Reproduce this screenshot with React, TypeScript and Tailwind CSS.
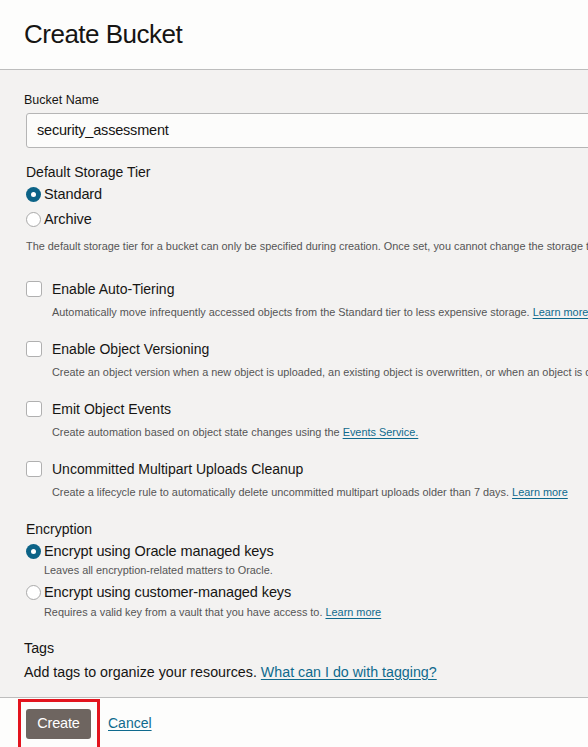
import React from 'react';

const Radio = ({ checked, label }: { checked?: boolean; label: string }) => (
    <div className="flex items-center h-[20px]">
        {checked ? (
            <span className="w-[15px] h-[15px] rounded-full bg-[#0c6387] flex items-center justify-center shrink-0">
                <span className="w-[5px] h-[5px] rounded-full bg-white" />
            </span>
        ) : (
            <span className="w-[15px] h-[15px] rounded-full bg-white border border-[#a9a9a9] shrink-0" />
        )}
        <span className="ml-[3px] text-[14.5px] leading-[20px] text-[#161513] tracking-[-0.1px]">
            {label}
        </span>
    </div>
);

const Link = ({ children }: { children: React.ReactNode }) => (
    <a className="text-[#0f6a8d] underline underline-offset-[2px] cursor-pointer">{children}</a>
);

const CheckOption = ({ label, children }: { label: string; children: React.ReactNode }) => (
    <div className="mt-[20px] first:mt-[26px]">
        <div className="flex items-center h-[20px]">
            <span className="w-[16px] h-[16px] rounded-[3px] bg-white border border-[#b0b0b0] shrink-0" />
            <span className="ml-[10px] text-[14px] leading-[20px] text-[#161513]">{label}</span>
        </div>
        <div className="mt-[6px] ml-[26px] text-[10.9px] leading-[14px] text-[#555]">{children}</div>
    </div>
);

export default function App() {
    return (
        <div
            className="w-[588px] h-[747px] overflow-hidden bg-white whitespace-nowrap"
            style={{ fontFamily: '"Liberation Sans", Arial, sans-serif' }}
        >
            <div className="h-[70px] border-b border-[#bdbdbd] bg-[#fdfdfc] pl-[24px] pt-[18px]">
                <h1 className="text-[26px] leading-[32px] text-[#161513] tracking-[-0.5px]">
                    Create Bucket
                </h1>
            </div>

            <div className="bg-[#f3f2f1] border-b border-[#bdbdbd] pl-[26px] pt-[22px] pb-[17px]">
                <div className="-ml-[2px] text-[12.5px] leading-[16px] text-[#161513]">Bucket Name</div>
                <div className="mt-[5px] h-[35px] w-[700px] bg-[#fcfcfb] border border-[#b5b5b5] rounded-[3px] flex items-center pl-[10px] text-[14.5px] text-[#161513] tracking-[-0.2px]">
                    security_assessment
                </div>

                <div className="mt-[16px] text-[14px] leading-[16px] text-[#161513]">
                    Default Storage Tier
                </div>
                <div className="mt-[4px]">
                    <Radio checked label="Standard" />
                </div>
                <div className="mt-[5px]">
                    <Radio label="Archive" />
                </div>
                <div className="mt-[10px] text-[10.9px] leading-[14px] text-[#555]">
                    The default storage tier for a bucket can only be specified during creation. Once set, you cannot change the storage tier.
                </div>

                <div>
                    <CheckOption label="Enable Auto-Tiering">
                        Automatically move infrequently accessed objects from the Standard tier to less expensive storage.{' '}
                        <Link>Learn more</Link>
                    </CheckOption>
                    <CheckOption label="Enable Object Versioning">
                        Create an object version when a new object is uploaded, an existing object is overwritten, or when an object is deleted.
                    </CheckOption>
                    <CheckOption label="Emit Object Events">
                        Create automation based on object state changes using the <Link>Events Service.</Link>
                    </CheckOption>
                    <CheckOption label="Uncommitted Multipart Uploads Cleanup">
                        Create a lifecycle rule to automatically delete uncommitted multipart uploads older than 7 days.{' '}
                        <Link>Learn more</Link>
                    </CheckOption>
                </div>

                <div className="mt-[22px] text-[14px] leading-[16px] text-[#161513]">Encryption</div>
                <div className="mt-[4px]">
                    <Radio checked label="Encrypt using Oracle managed keys" />
                </div>
                <div className="mt-[2px] ml-[18px] text-[10.9px] leading-[14px] text-[#555]">
                    Leaves all encryption-related matters to Oracle.
                </div>
                <div className="mt-[5px]">
                    <Radio label="Encrypt using customer-managed keys" />
                </div>
                <div className="mt-[3px] ml-[18px] text-[10.9px] leading-[14px] text-[#555]">
                    Requires a valid key from a vault that you have access to. <Link>Learn more</Link>
                </div>

                <div className="-ml-[2px] mt-[21px] text-[14.25px] leading-[16px] text-[#161513]">Tags</div>
                <div className="-ml-[2px] mt-[8px] text-[14.25px] leading-[16px] text-[#161513]">
                    Add tags to organize your resources. <Link>What can I do with tagging?</Link>
                </div>
            </div>

            <div className="bg-[#fdfdfc] pl-[18px] pt-[1px] flex items-start h-[50px]">
                <div className="border-[3px] border-[#e3141e] pl-[5px] pr-[6px] pt-[7px] pb-[10px]">
                    <button className="h-[30px] w-[65px] rounded-[3px] bg-[#6e6560] text-white text-[14.5px] tracking-[-0.2px]">
                        Create
                    </button>
                </div>
                <a className="ml-[8px] mt-[16px] text-[14px] leading-[16px] text-[#0f6a8d] underline underline-offset-[2px]">
                    Cancel
                </a>
            </div>
        </div>
    );
}
